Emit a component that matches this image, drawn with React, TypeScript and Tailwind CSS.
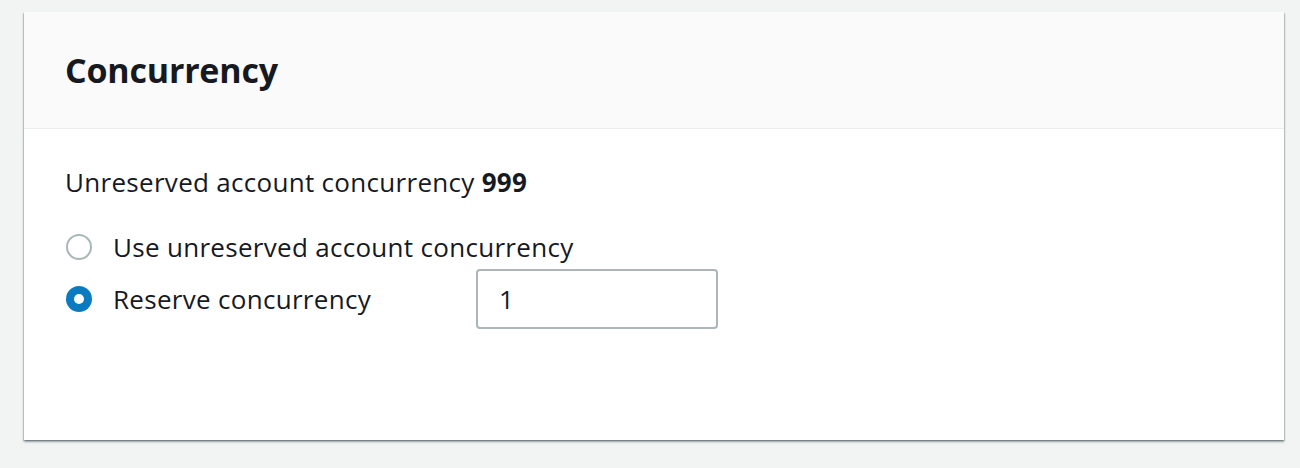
import { useState } from 'react';

function Radio({ checked }: { checked: boolean }) {
  return (
    <svg width="28" height="28" viewBox="0 0 28 28" className="shrink-0">
      {checked ? (
        <>
          <circle cx="14" cy="14" r="13" fill="#0a7bc1" />
          <circle cx="14" cy="14" r="5" fill="#ffffff" />
        </>
      ) : (
        <circle cx="14" cy="14" r="12" fill="#ffffff" stroke="#aab7b8" strokeWidth="2" />
      )}
    </svg>
  );
}

export default function App() {
  const [mode, setMode] = useState<'unreserved' | 'reserve'>('reserve');
  const [value, setValue] = useState('1');

  return (
    <div
      className="min-h-[468px] w-[1300px] bg-[#f2f3f3] pt-[12px] pl-[24px] text-[#16191f]"
      style={{ fontFamily: '"Open Sans", "Noto Sans", sans-serif' }}
    >
      <div className="w-[1260px] h-[428px] bg-white shadow-[0_2px_2px_0_rgba(0,28,36,0.35),1px_1px_1px_0_rgba(0,28,36,0.15),-1px_1px_1px_0_rgba(0,28,36,0.15)] flex flex-col">
        <div className="h-[117px] bg-[#fafafa] border-b border-[#eaeded] flex items-center px-[41px]">
          <h2 className="text-[34px] font-bold tracking-[-0.2px]">Concurrency</h2>
        </div>
        <div className="px-[41px] pt-[36px]">
          <p className="text-[26px] leading-[34px] tracking-[0.3px]">
            Unreserved account concurrency <span className="font-bold">999</span>
          </p>
          <div className="mt-[26px] flex flex-col">
            <label
              className="flex items-center gap-[20px] h-[44px] cursor-pointer"
              onClick={() => setMode('unreserved')}
            >
              <Radio checked={mode === 'unreserved'} />
              <span className="text-[26px] tracking-[0.3px]">Use unreserved account concurrency</span>
            </label>
            <div className="flex items-center h-[60px]">
              <label
                className="flex items-center gap-[20px] w-[411px] cursor-pointer"
                onClick={() => setMode('reserve')}
              >
                <Radio checked={mode === 'reserve'} />
                <span className="text-[26px] tracking-[0.3px]">Reserve concurrency</span>
              </label>
              <input
                value={value}
                onChange={(e) => setValue(e.target.value)}
                className="w-[242px] h-[60px] border-2 border-[#aab7b8] rounded-[4px] px-[21px] text-[26px] outline-none"
              />
            </div>
          </div>
        </div>
      </div>
    </div>
  );
}
